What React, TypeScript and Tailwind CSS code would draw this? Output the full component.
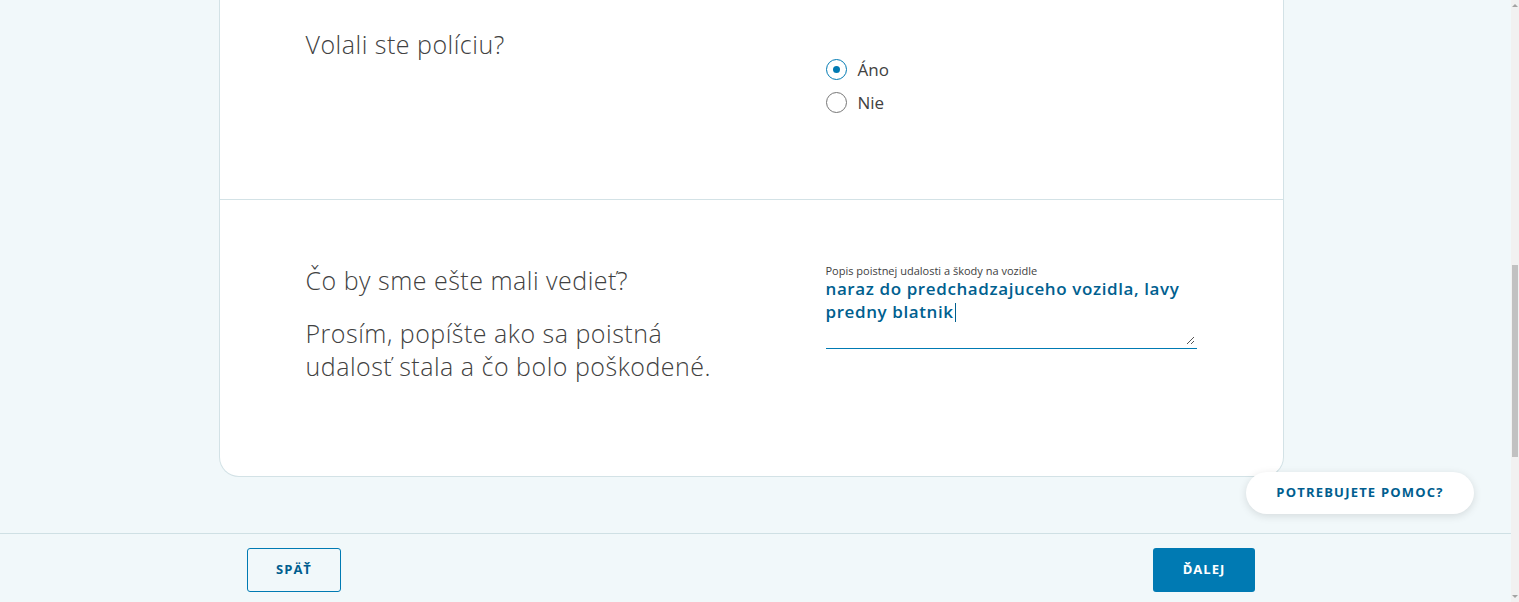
import { useState } from "react";

const sans = "font-['Open_Sans','Lato',sans-serif]";

const options = ["Áno", "Nie"];

function Radio({ label, checked, onClick }: { label: string; checked: boolean; onClick: () => void }) {
  return (
    <button type="button" onClick={onClick} className="flex h-[33px] items-center gap-[11px]">
      <span
        className={
          "flex h-[21px] w-[21px] items-center justify-center rounded-full border bg-white " +
          (checked ? "border-[#007ab3]" : "border-[#767676]")
        }
      >
        {checked && <span className="h-[7px] w-[7px] rounded-full bg-[#007ab3]" />}
      </span>
      <span className="text-[17px] text-[#414141]">{label}</span>
    </button>
  );
}

export default function App() {
  const [police, setPolice] = useState("Áno");

  return (
    <div className={`flex h-[602px] w-full overflow-hidden bg-[#f1f8fa] ${sans}`}>
      <div className="relative flex flex-1 flex-col">
        <main className="flex-1 pr-[9px]">
          <div className="mx-auto w-[1065px] rounded-b-[20px] border-x border-b border-[#d3e2e6] bg-white">
            {/* Police */}
            <section className="grid h-[200px] grid-cols-[520px_1fr] border-b border-[#d3e2e6] px-[86px] pt-[28px]">
              <h2 className="text-[25px] leading-[32px] font-light tracking-[0.5px] text-[#414141]">Volali ste políciu?</h2>
              <div className="mt-[25px] flex flex-col">
                {options.map((o) => (
                  <Radio key={o} label={o} checked={police === o} onClick={() => setPolice(o)} />
                ))}
              </div>
            </section>

            {/* Description */}
            <section className="grid h-[276px] grid-cols-[520px_371px] px-[86px] pt-[64px]">
              <div className="w-[430px] text-[25px] font-light tracking-[0.5px] text-[#414141]">
                <h2 className="leading-[32px]">Čo by sme ešte mali vedieť?</h2>
                <p className="mt-[21px] leading-[33px]">Prosím, popíšte ako sa poistná udalosť stala a čo bolo poškodené.</p>
              </div>
              <div className="pt-[1px]">
                <label className="block text-[11px] leading-[12px] text-[#414141]">
                  Popis poistnej udalosti a škody na vozidle
                </label>
                <div className="relative h-[72px] border-b border-[#007ab3] text-[17px] leading-[23px] font-semibold tracking-[0.6px] text-[#00608f]">
                  naraz do predchadzajuceho vozidla, lavy predny blatnik
                  <span className="ml-[1px] inline-block h-[19px] w-px align-[-4px] bg-[#00608f]" />
                  <svg className="absolute right-[2px] bottom-[3px]" width="9" height="9" viewBox="0 0 9 9">
                    <path d="M8 1L1 8M8 5L5 8" stroke="#555" strokeWidth="1" />
                  </svg>
                </div>
              </div>
            </section>
          </div>
        </main>

        <button
          type="button"
          className="absolute right-[37px] top-[472px] h-[42px] w-[228px] rounded-full bg-white text-[13px] font-bold tracking-[1.2px] text-[#005e8f] shadow-[0_2px_8px_rgba(0,0,0,0.12)]"
        >
          POTREBUJETE POMOC?
        </button>

        <footer className="flex h-[69px] items-start border-t border-[#cfe0e4] pr-[9px] pt-[14px]">
          <div className="mx-auto flex w-[1008px] justify-between">
            <button
              type="button"
              className="h-[44px] w-[94px] rounded-[3px] border border-[#007ab3] text-[13px] font-bold tracking-[1px] text-[#005e8f]"
            >
              SPÄŤ
            </button>
            <button
              type="button"
              className="h-[44px] w-[102px] rounded-[3px] bg-[#007ab3] text-[13px] font-bold tracking-[1px] text-white"
            >
              ĎALEJ
            </button>
          </div>
        </footer>
      </div>

      {/* scrollbar */}
      <div className="flex w-[8px] flex-col items-center bg-[#f1f1f1]">
        <span className="mt-[4px] h-0 w-0 border-x-[3px] border-b-[3px] border-x-transparent border-b-[#a3a3a3]" />
        <div className="mt-[258px] h-[192px] w-[6px] bg-[#c1c1c1]" />
        <span className="mt-auto mb-[4px] h-0 w-0 border-x-[3px] border-t-[3px] border-x-transparent border-t-[#a3a3a3]" />
      </div>
    </div>
  );
}
